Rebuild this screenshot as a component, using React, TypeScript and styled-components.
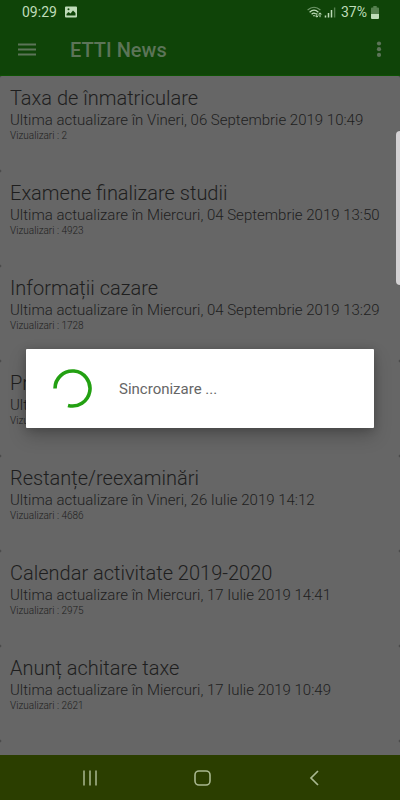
import React from "react";
import styled, { createGlobalStyle } from "styled-components";

const GlobalStyle = createGlobalStyle`
  *, *::before, *::after { box-sizing: border-box; }
  html, body, #root { height: 100%; }
  body { margin: 0; background: #666; font-family: Roboto, "Noto Sans", sans-serif; }
  button { font: inherit; color: inherit; background: none; border: 0; padding: 0; }
  svg { display: block; }
`;

const Screen = styled.div`
  position: relative;
  display: flex;
  flex-direction: column;
  height: 100vh;
  overflow: hidden;
  background: #666;
`;

const Header = styled.header`
  flex: none;
  background: #0f4408;
  border-bottom: 1px solid #0d5203;
`;

const StatusBar = styled.div`
  display: flex;
  align-items: center;
  justify-content: space-between;
  height: 24px;
  padding: 0 21px 0 22px;
  font-size: 14px;
  line-height: 24px;
  color: #bfdcb9;
`;

const StatusGroup = styled.div<{ $gap: number }>`
  display: flex;
  align-items: center;
  gap: ${(p) => p.$gap}px;
`;

const Toolbar = styled.div`
  display: flex;
  align-items: center;
  height: 51px;
  padding: 0 16px 0 18px;
  color: #5c7458;
`;

const Title = styled.h1`
  flex: 1;
  margin: 0 0 0 34px;
  font-size: 20px;
  line-height: 24px;
  font-weight: 500;
`;

const News = styled.main`
  flex: 1;
  min-height: 0;
  overflow: hidden;
  background: #404040;
`;

const Item = styled.article`
  height: 95px;
  padding: 10px 10px 0;
  border-radius: 2px;
  background: #666;
  white-space: nowrap;
`;

const ItemTitle = styled.h2`
  margin: 0;
  font-size: 20px;
  line-height: 24px;
  font-weight: 300;
  color: #1e1e1e;
`;

const ItemDate = styled.p`
  margin: 0;
  font-size: 15px;
  line-height: 20px;
  font-weight: 300;
  color: #1e1e1e;
`;

const ItemViews = styled.p`
  margin: 0;
  font-size: 10px;
  line-height: 12px;
  font-weight: 300;
  color: #1e1e1e;
`;

const NavBar = styled.nav`
  flex: none;
  display: grid;
  grid-template-columns: 1fr 1fr 1fr;
  align-items: center;
  height: 45px;
  padding: 0 30px 0 34px;
  background: #2b3e00;
  color: #a9b88f;
`;

const NavButton = styled.button`
  display: flex;
  align-items: center;
  justify-content: center;
  height: 45px;
`;

const DialogLayer = styled.div`
  position: absolute;
  inset: 0;
  display: flex;
  align-items: center;
  padding: 0 26px 23px;
`;

const Dialog = styled.div`
  display: flex;
  align-items: center;
  gap: 26px;
  width: 100%;
  height: 79px;
  padding: 0 26px;
  border-radius: 1px;
  background: #fff;
  box-shadow: 0 8px 18px rgba(0, 0, 0, 0.22), 0 1px 8px rgba(0, 0, 0, 0.18);
  font-size: 15px;
  line-height: 20px;
  color: #666;
`;

const EdgeHandle = styled.div`
  position: absolute;
  top: 131px;
  right: 0;
  width: 4px;
  height: 154px;
  border-radius: 4px 0 0 4px;
  background: #d4d2d4;
`;

const items = [
  { title: "Taxa de înmatriculare", date: "Vineri, 06 Septembrie 2019 10:49", views: 2 },
  { title: "Examene finalizare studii", date: "Miercuri, 04 Septembrie 2019 13:50", views: 4923 },
  { title: "Informații cazare", date: "Miercuri, 04 Septembrie 2019 13:29", views: 1728 },
  { title: "Pr", date: "", views: null },
  { title: "Restanțe/reexaminări", date: "Vineri, 26 Iulie 2019 14:12", views: 4686 },
  { title: "Calendar activitate 2019-2020", date: "Miercuri, 17 Iulie 2019 14:41", views: 2975 },
  { title: "Anunț achitare taxe", date: "Miercuri, 17 Iulie 2019 10:49", views: 2621 },
];

export default function App() {
  return (
    <Screen>
      <GlobalStyle />
      <Header>
        <StatusBar>
          <StatusGroup $gap={8}>
            <span>09:29</span>
            <svg width="12" height="12" viewBox="0 0 12 12" aria-hidden="true">
              <path fillRule="evenodd" fill="currentColor" d="M1 .5h10a1 1 0 0 1 1 1v9a1 1 0 0 1-1 1H1a1 1 0 0 1-1-1v-9a1 1 0 0 1 1-1ZM1.500 9.500h9V7L8 4.500 5.500 7.500 3.500 6l-2 2ZM3.500 2.300a1 1 0 1 0 0 2 1 1 0 0 0 0-2Z" />
            </svg>
          </StatusGroup>
          <StatusGroup $gap={4}>
            <svg width="30" height="13" viewBox="0 0 30 13" fill="none" stroke="currentColor" aria-hidden="true">
              <path d="M.6 4Q7-1.500 13.400 4" strokeWidth="1.200" opacity=".55" />
              <path d="M2.600 6.200Q7 2.200 11.400 6.200M4.600 8.300Q6.800 6.200 8.800 8" strokeWidth="1.200" />
              <path d="M5.800 9.200h2.400L7 10.700Z" fill="currentColor" stroke="none" />
              <path d="M9.800 7v4M8.300 9.600 9.800 11.200l1.500-1.600M13 11.200V7M11.500 8.400 13 6.800l1.500 1.600" strokeWidth="1" />
              <path d="M18.500 9.500v2M21.500 7v4.500M24.500 4v7.500" strokeWidth="1.500" />
              <path d="M27.600 1.500v10" strokeWidth="1.400" opacity=".4" />
            </svg>
            <span>37%</span>
            <svg width="8" height="13" viewBox="0 0 8 13" fill="currentColor" aria-hidden="true">
              <path d="M2.300 0h3.400v1.500H7a1 1 0 0 1 1 1V8H0V2.500a1 1 0 0 1 1-1h1.300Z" opacity=".4" />
              <path d="M0 8h8v4a1 1 0 0 1-1 1H1a1 1 0 0 1-1-1Z" />
            </svg>
          </StatusGroup>
        </StatusBar>
        <Toolbar>
          <button aria-label="Meniu">
            <svg width="18" height="14" viewBox="0 0 18 14" fill="none" stroke="currentColor" strokeWidth="2" aria-hidden="true">
              <path d="M0 1.500h18M0 6.500h18M0 11.500h18" />
            </svg>
          </button>
          <Title>ETTI News</Title>
          <button aria-label="Mai multe opțiuni">
            <svg width="10" height="18" viewBox="0 0 10 18" fill="currentColor" aria-hidden="true">
              <circle cx="5" cy="2.500" r="2.100" />
              <circle cx="5" cy="8.200" r="2.100" />
              <circle cx="5" cy="13.900" r="2.100" />
            </svg>
          </button>
        </Toolbar>
      </Header>
      <News>
        {items.map((item) => (
          <Item key={item.title}>
            <ItemTitle>{item.title}</ItemTitle>
            <ItemDate>Ultima actualizare în {item.date}</ItemDate>
            <ItemViews>Vizualizari : {item.views}</ItemViews>
          </Item>
        ))}
        <Item />
      </News>
      <NavBar>
        <NavButton aria-label="Aplicații recente">
          <svg width="16" height="16" viewBox="0 0 16 16" fill="none" stroke="currentColor" strokeWidth="1.500" aria-hidden="true">
            <path d="M2 .5v15M8 .5v15M14 .5v15" />
          </svg>
        </NavButton>
        <NavButton aria-label="Acasă">
          <svg width="17" height="16" viewBox="0 0 17 16" fill="none" stroke="currentColor" strokeWidth="1.600" aria-hidden="true">
            <rect x="1" y="1" width="15" height="14" rx="4" />
          </svg>
        </NavButton>
        <NavButton aria-label="Înapoi">
          <svg width="10" height="16" viewBox="0 0 10 16" fill="none" stroke="currentColor" strokeWidth="1.700" aria-hidden="true">
            <path d="M9 1 2 8l7 7" />
          </svg>
        </NavButton>
      </NavBar>
      <EdgeHandle />
      <DialogLayer>
        <Dialog role="dialog" aria-label="Sincronizare">
          <svg width="41" height="41" viewBox="0 0 41 41" fill="none" aria-hidden="true">
            <path d="M3 20.500A17.500 17.500 0 1 1 16 37.400" stroke="#23a012" strokeWidth="3.600" />
          </svg>
          <span>Sincronizare ...</span>
        </Dialog>
      </DialogLayer>
    </Screen>
  );
}
